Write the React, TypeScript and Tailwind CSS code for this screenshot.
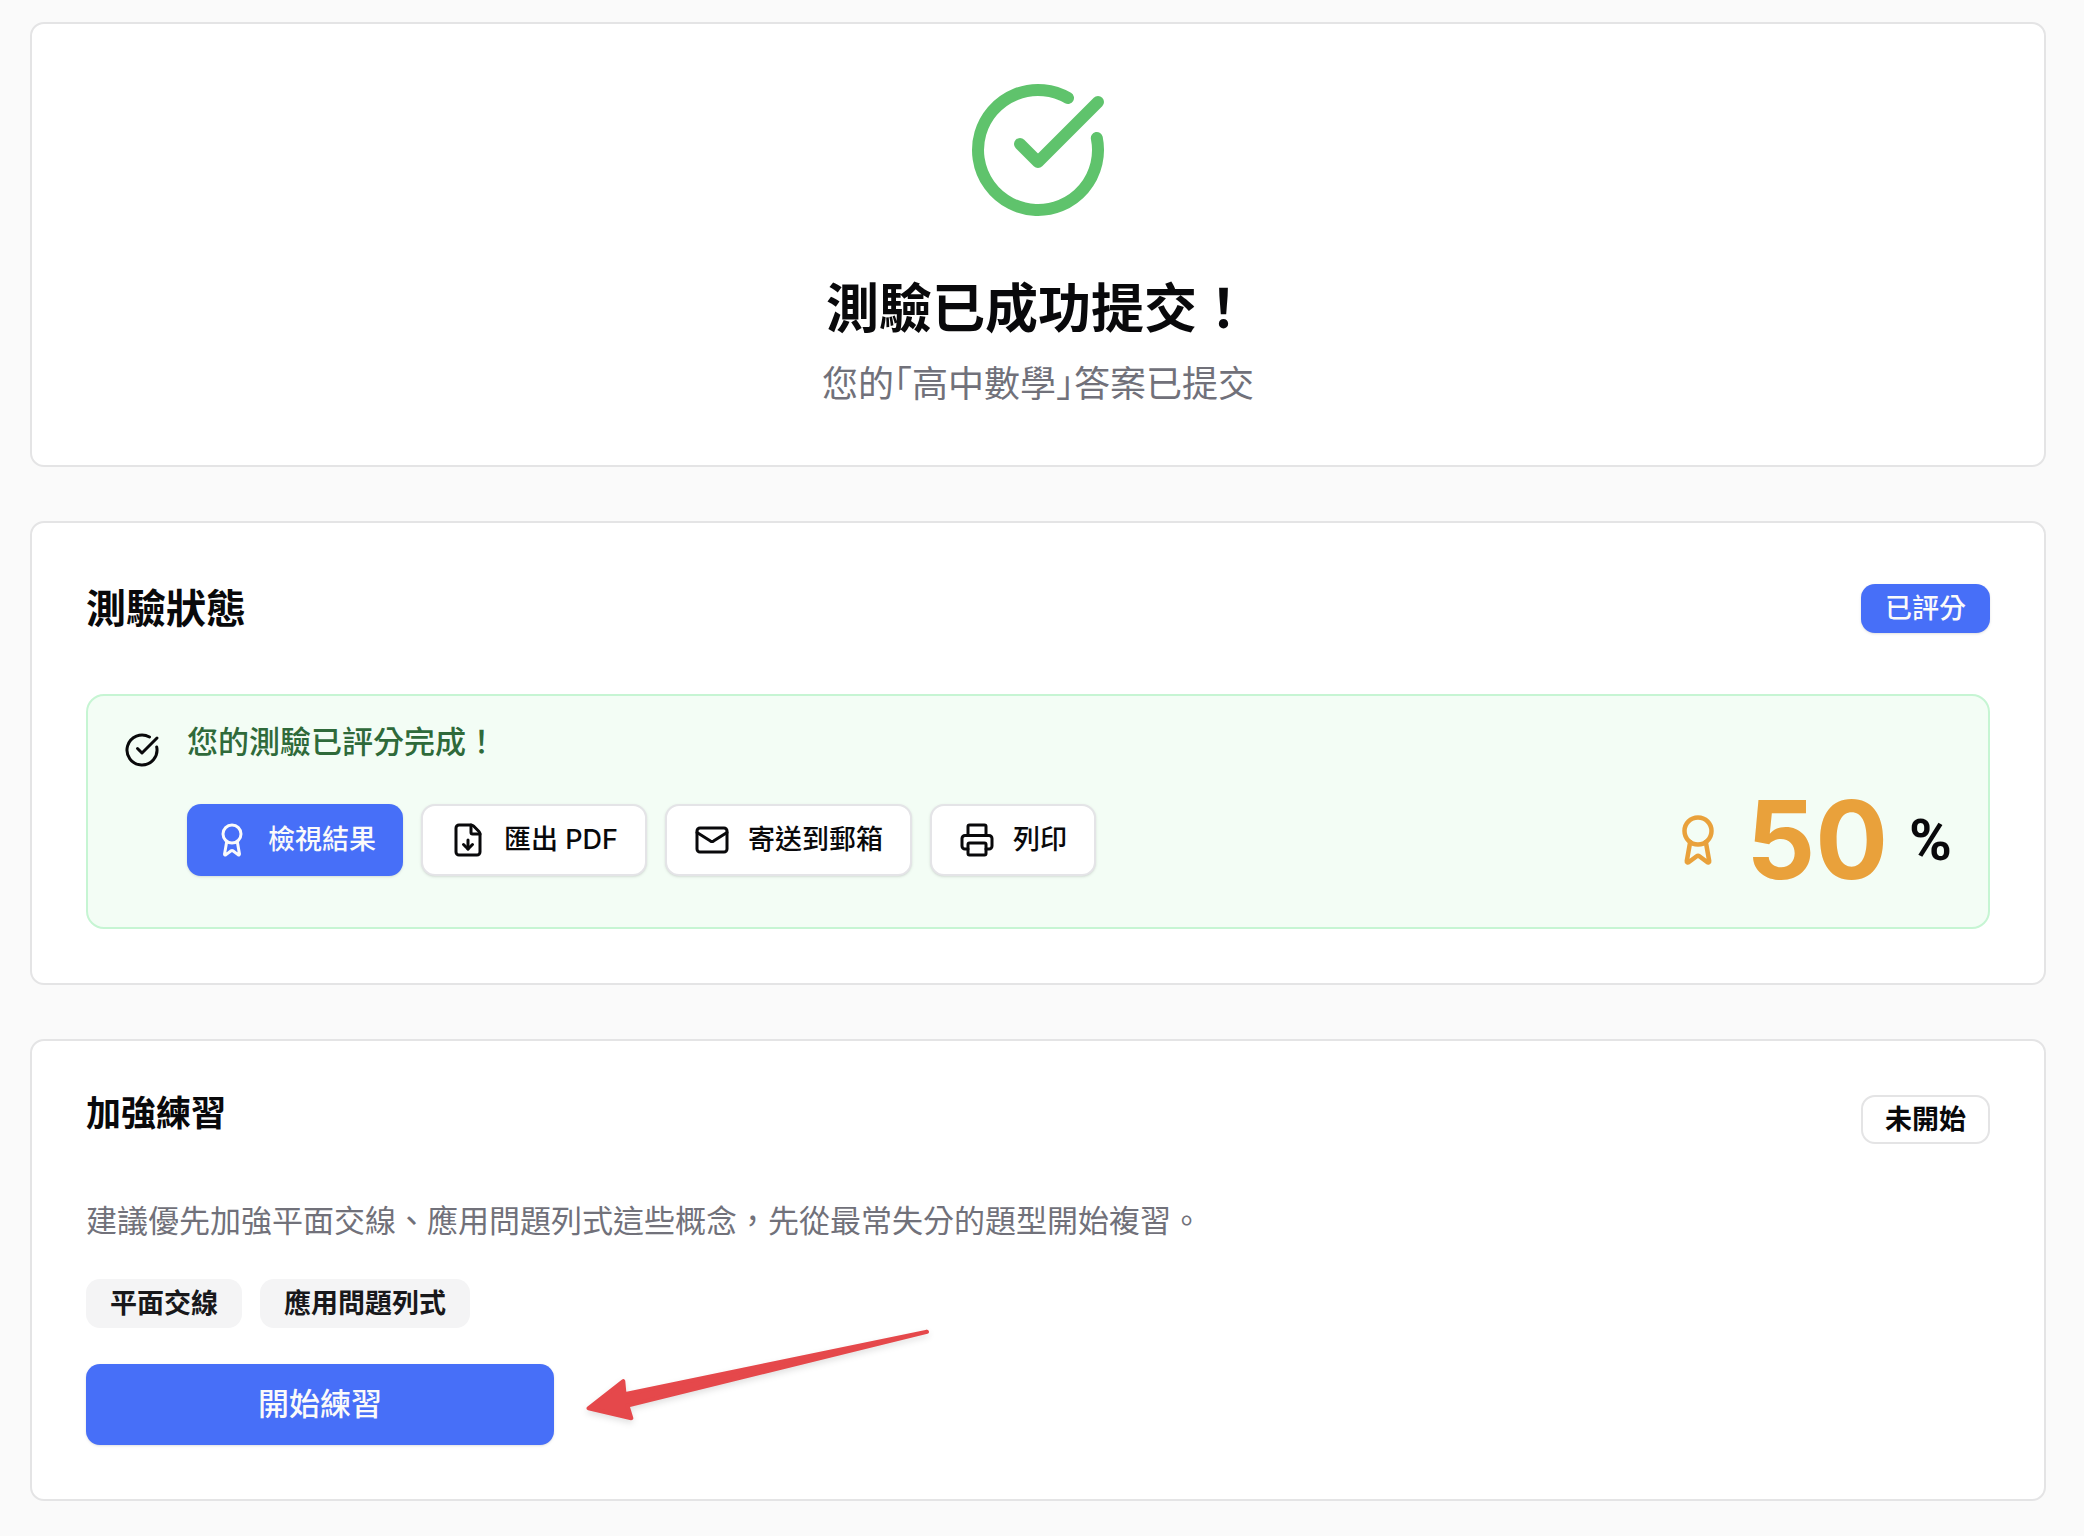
import React from 'react';
import { Award, CircleCheckBig, FileDown, Mail, Printer } from 'lucide-react';
import type { LucideIcon } from 'lucide-react';

const exportActions: { label: string; icon: LucideIcon }[] = [
  { label: '匯出 PDF', icon: FileDown },
  { label: '寄送到郵箱', icon: Mail },
  { label: '列印', icon: Printer },
];

const weakTopics = ['平面交線', '應用問題列式'];

const Card: React.FC<{ children: React.ReactNode }> = ({ children }) => (
  <section className="rounded-[14px] border-2 border-[#e4e4e5] bg-white p-[54px]">{children}</section>
);

const Badge: React.FC<{ className: string; children: React.ReactNode }> = ({ className, children }) => (
  <span
    className={`inline-flex h-[49px] shrink-0 items-center rounded-[14px] border-2 px-[22px] text-[27px] leading-9 ${className}`}
  >
    {children}
  </span>
);

// Hand-drawn pointer next to the practice button
const Pointer: React.FC = () => (
  <svg
    className="pointer-events-none absolute bottom-[18px] left-full ml-6 h-[104px] w-[360px] drop-shadow-md"
    viewBox="0 0 360 104"
    fill="#e5484b"
    stroke="#e5484b"
    strokeWidth="4"
    strokeLinejoin="round"
    aria-hidden="true"
  >
    <path d="M10.5 85.3 45.3 58.2 46.5 71.2 349 8.8 49.5 82.6 53.3 95.2Z" />
  </svg>
);

const SubmittedCard: React.FC = () => (
  <Card>
    <div className="flex flex-col items-center text-center">
      <CircleCheckBig className="size-36 text-[#5fc36c]" />
      <h1 className="mt-[51px] text-[53px] leading-[72px] font-semibold">測驗已成功提交！</h1>
      <p className="mt-3 text-4xl leading-[54px] text-[#71717a] [font-feature-settings:'halt']">
        您的「高中數學」答案已提交
      </p>
    </div>
  </Card>
);

const StatusCard: React.FC = () => (
  <Card>
    <div className="flex items-center justify-between">
      <h2 className="text-[40px] leading-[63px] font-semibold">測驗狀態</h2>
      <Badge className="border-transparent bg-[#476ff8] bg-origin-border font-medium text-[#fafafa] shadow">已評分</Badge>
    </div>

    <div className="mt-[54px] flex gap-[27px] rounded-[18px] border-2 border-[#c6f5d3] bg-[#f3fdf5] px-9 pt-7 pb-[51px]">
      <CircleCheckBig className="mt-2 size-9 shrink-0" />
      <div className="flex-1">
        <p className="text-[31px] leading-9 font-medium text-[#2f6a3a]">您的測驗已評分完成！</p>
        <div className="mt-11 flex items-center justify-between">
          <div className="flex gap-[18px]">
            <button className="flex h-[72px] items-center gap-[18px] rounded-[14px] bg-[#476ff8] px-[27px] text-[27px] font-medium text-[#fafafa] shadow">
              <Award className="size-9" />
              檢視結果
            </button>
            {exportActions.map(({ label, icon: Icon }) => (
              <button
                key={label}
                className="flex h-[72px] items-center gap-[18px] rounded-[14px] border-2 border-[#e4e4e7] bg-white px-[27px] text-[27px] font-medium shadow-sm"
              >
                <Icon className="size-9" />
                {label}
              </button>
            ))}
          </div>
          <div className="flex h-[72px] items-center gap-[21px]">
            <Award className="size-[54px] text-[#e9a13b]" />
            <span className="text-[108px] leading-none font-bold text-[#e9a13b]">50</span>
            <span className="font-['Roboto',sans-serif] text-[58px] leading-none font-bold">%</span>
          </div>
        </div>
      </div>
    </div>
  </Card>
);

const PracticeCard: React.FC = () => (
  <Card>
    <div className="flex items-start justify-between">
      <h2 className="text-[35px] leading-9 font-semibold">加強練習</h2>
      <Badge className="border-[#e4e4e5] font-semibold">未開始</Badge>
    </div>

    <p className="mt-[54px] text-[31px] leading-[45px] text-[#71717a]">
      建議優先加強平面交線、應用問題列式這些概念，先從最常失分的題型開始複習。
    </p>

    <div className="mt-9 flex gap-[18px]">
      {weakTopics.map((topic) => (
        <Badge key={topic} className="border-transparent bg-[#f4f4f5] font-semibold text-[#18181b]">
          {topic}
        </Badge>
      ))}
    </div>

    <div className="relative mt-9 w-fit">
      <button className="h-[81px] w-[468px] rounded-[14px] bg-[#476ff8] text-[31px] font-medium text-[#fafafa] shadow">
        開始練習
      </button>
      <Pointer />
    </div>
  </Card>
);

const App: React.FC = () => (
  <main
    lang="zh-Hant"
    className="flex min-h-screen flex-col gap-[54px] bg-[#fafafa] pt-[22px] pr-[38px] pb-[34px] pl-[30px] font-['Inter','Noto_Sans_CJK_TC',sans-serif] text-[#09090b]"
  >
    <SubmittedCard />
    <StatusCard />
    <PracticeCard />
  </main>
);

export default App;
